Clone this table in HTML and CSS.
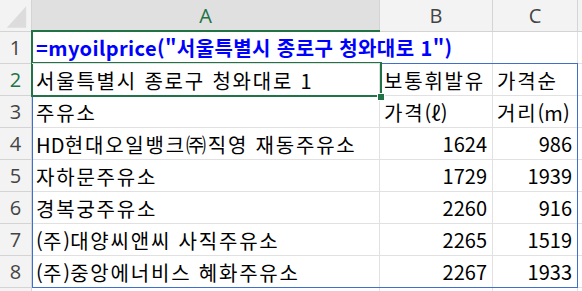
FILE: index.html
```html
<!DOCTYPE html>
<html lang="ko">
<head>
<meta charset="utf-8">
<link rel="stylesheet" href="styles.css">
</head>
<body>
<div class="sheet">
  <div class="grid">
    <div class="hdr corner">
      <svg class="tri" width="32" height="32" viewBox="0 0 32 32"><polygon points="7,28 27,28 27,6" fill="#dcdcdc"/></svg>
    </div>
    <div class="hdr col sel">A</div>
    <div class="hdr col">B</div>
    <div class="hdr col">C</div>
    <div class="hdr col last"></div>

    <div class="hdr row">1</div>
    <div class="cell formula">=myoilprice("서울특별시 종로구 청와대로 1")</div>
    <div class="cell"></div>
    <div class="cell"></div>
    <div class="cell"></div>

    <div class="hdr row selrow">2</div>
    <div class="cell txt">서울특별시 종로구 청와대로 <span class="lat">1</span></div>
    <div class="cell txt">보통휘발유</div>
    <div class="cell txt">가격순</div>
    <div class="cell"></div>

    <div class="hdr row">3</div>
    <div class="cell txt">주유소</div>
    <div class="cell txt">가격<span class="lat">(ℓ)</span></div>
    <div class="cell txt">거리<span class="lat">(m)</span></div>
    <div class="cell"></div>

    <div class="hdr row">4</div>
    <div class="cell txt"><span class="lat">HD</span>현대오일뱅크㈜직영 재동주유소</div>
    <div class="cell num">1624</div>
    <div class="cell num">986</div>
    <div class="cell"></div>

    <div class="hdr row">5</div>
    <div class="cell txt">자하문주유소</div>
    <div class="cell num">1729</div>
    <div class="cell num">1939</div>
    <div class="cell"></div>

    <div class="hdr row">6</div>
    <div class="cell txt">경복궁주유소</div>
    <div class="cell num">2260</div>
    <div class="cell num">916</div>
    <div class="cell"></div>

    <div class="hdr row">7</div>
    <div class="cell txt"><span class="lat">(</span>주<span class="lat">)</span>대양씨앤씨 사직주유소</div>
    <div class="cell num">2265</div>
    <div class="cell num">1519</div>
    <div class="cell"></div>

    <div class="hdr row">8</div>
    <div class="cell txt"><span class="lat">(</span>주<span class="lat">)</span>중앙에너비스 혜화주유소</div>
    <div class="cell num">2267</div>
    <div class="cell num">1933</div>
    <div class="cell"></div>

    <div class="hdr row"></div>
    <div class="cell"></div>
    <div class="cell"></div>
    <div class="cell"></div>
    <div class="cell"></div>
  </div>
  <div class="spill"></div>
  <div class="colmark"></div>
  <div class="rowmark"></div>
  <div class="active"></div>
  <div class="handle"></div>
</div>
</body>
</html>
```

FILE: styles.css
```css
html, body {
  margin: 0;
  padding: 0;
  background: #ffffff;
  overflow: hidden;
}

.sheet {
  position: relative;
  width: 582px;
  height: 291px;
  overflow: hidden;
}

.grid {
  display: grid;
  grid-template-columns: 32px 348px 113px 85px 40px;
  grid-auto-rows: 32px;
}

.hdr {
  background: #f3f3f3;
  border-right: 1px solid #d4d4d4;
  border-bottom: 1px solid #d4d4d4;
  box-sizing: border-box;
  color: #444444;
  font-family: "Open Sans", "Noto Sans", sans-serif;
  font-size: 20px;
  display: flex;
  align-items: center;
  justify-content: center;
}

.corner {
  position: relative;
  background: #f3f3f3;
}

.tri {
  display: block;
}

.col.sel {
  background: #e0e0e0;
  color: #217346;
}

.row.selrow {
  color: #217346;
}

.cell {
  border-right: 1px solid #e1e1e1;
  border-bottom: 1px solid #e1e1e1;
  box-sizing: border-box;
  font-family: "Noto Sans CJK KR", "Noto Sans", sans-serif;
  font-size: 20px;
  color: #000000;
  white-space: pre;
  padding: 0 4px 1px 4px;
  display: flex;
  align-items: flex-end;
  line-height: 29px;
}

.cell.txt {
  display: block;
  padding-top: 2px;
  letter-spacing: 1.8px;
}

.lat {
  letter-spacing: 0.2px;
}

.cell.formula {
  color: #0000ff;
  font-weight: bold;
  letter-spacing: 0.4px;
  border-right: none;
  overflow: visible;
  position: relative;
  z-index: 1;
}

.cell.num {
  justify-content: flex-end;
  padding-right: 5px;
}

.spill {
  position: absolute;
  left: 32px;
  top: 63px;
  width: 546px;
  height: 225px;
  border: 1px solid #3e6fcf;
  box-sizing: border-box;
}

.colmark {
  position: absolute;
  left: 32px;
  top: 30px;
  width: 348px;
  height: 2px;
  background: #217346;
}

.rowmark {
  position: absolute;
  left: 31px;
  top: 30px;
  width: 2px;
  height: 34px;
  background: #217346;
}

.active {
  position: absolute;
  left: 31px;
  top: 62px;
  width: 351px;
  height: 35px;
  border: 2px solid #217346;
  box-sizing: border-box;
}

.handle {
  position: absolute;
  left: 377px;
  top: 93px;
  width: 6px;
  height: 6px;
  background: #217346;
  border: 1px solid #ffffff;
}
```
